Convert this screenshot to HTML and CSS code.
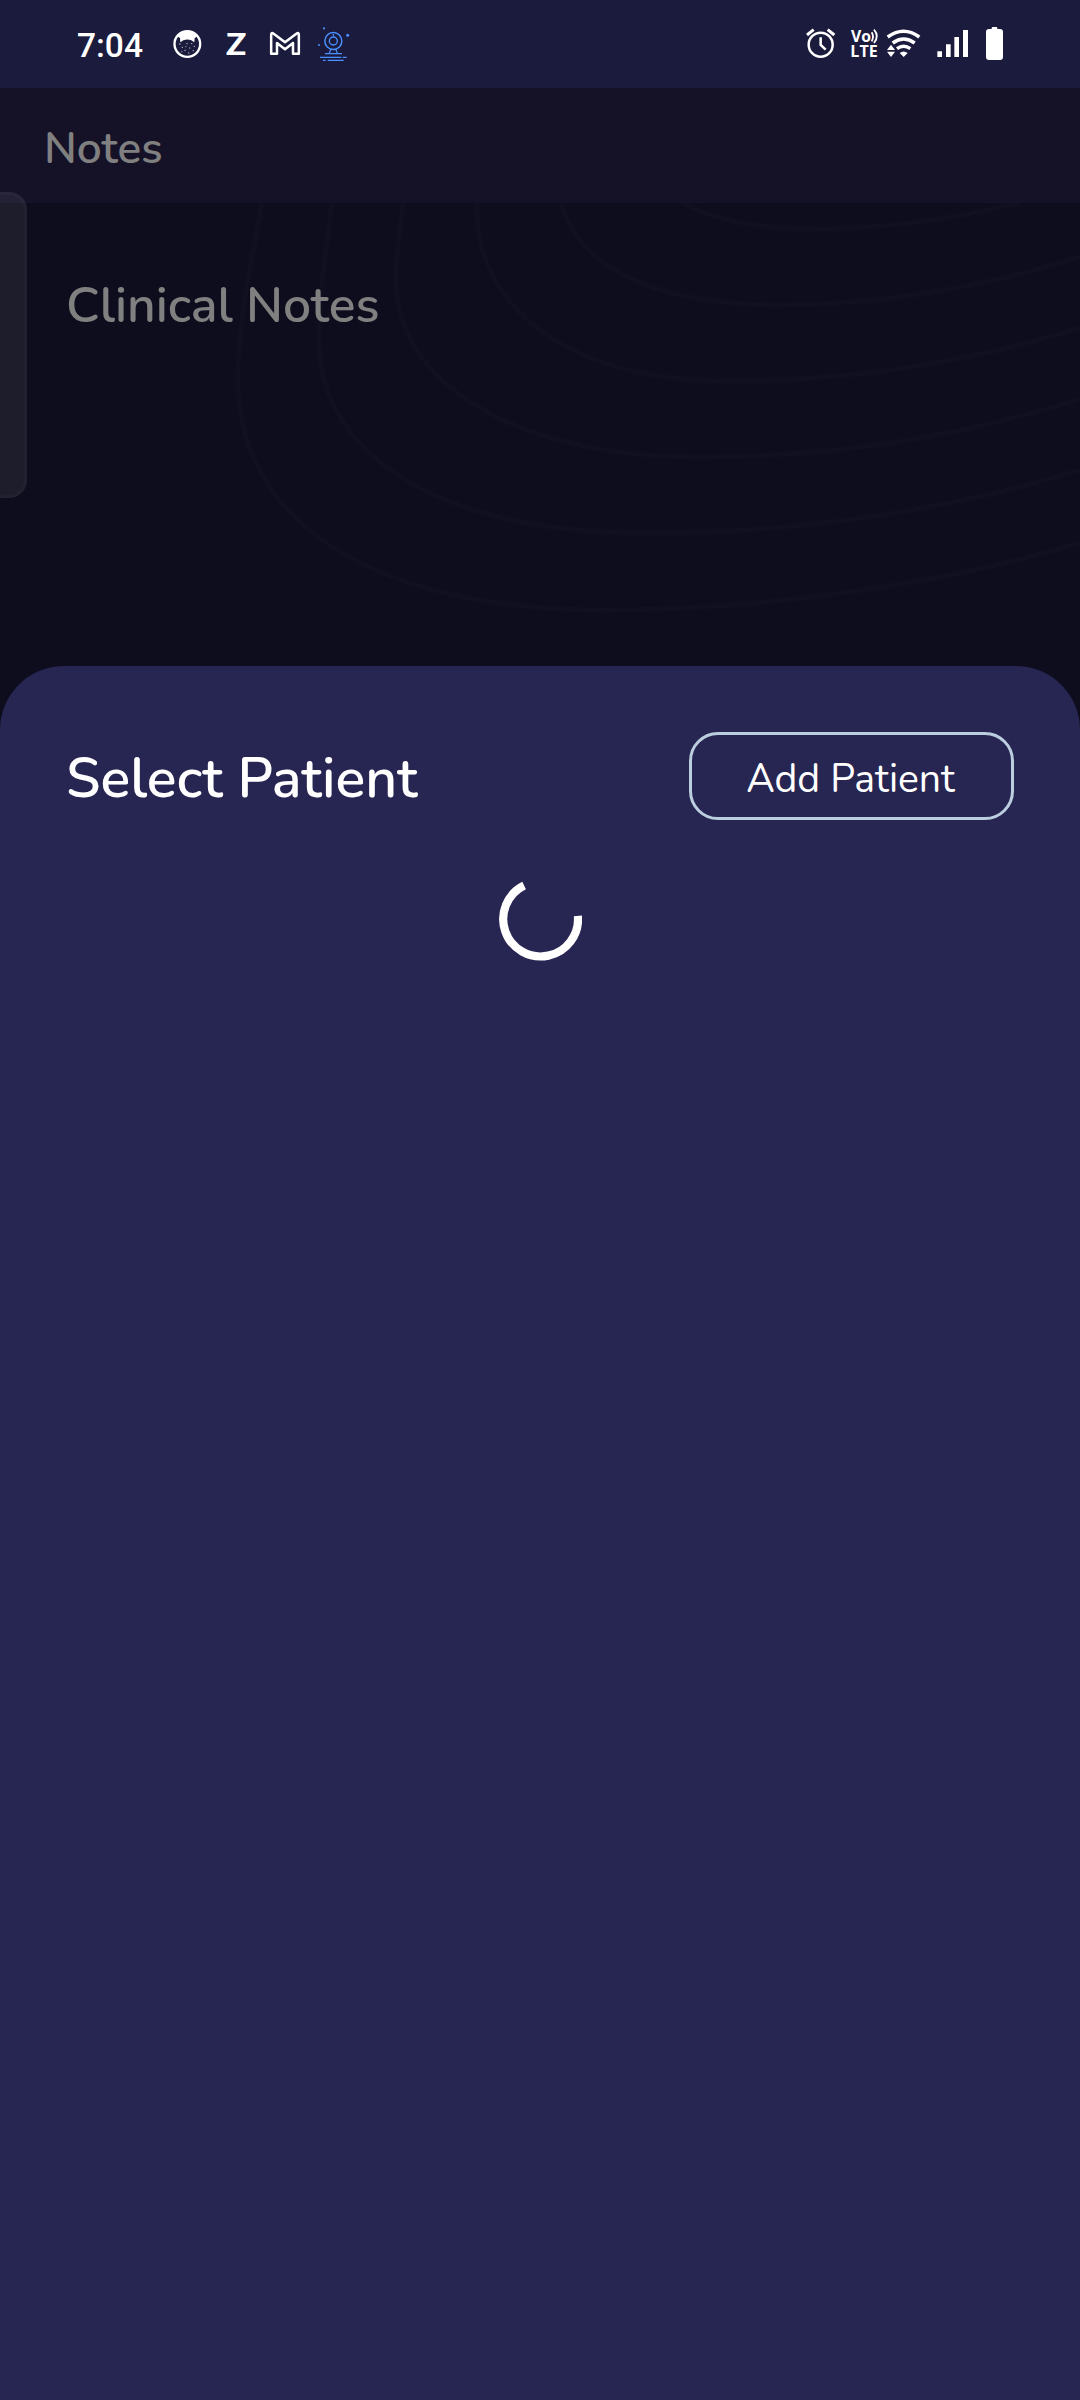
FILE: index.html
```html
<!DOCTYPE html>
<html lang="en">
<head>
<meta charset="utf-8">
<title>Clinical Notes</title>
<link rel="stylesheet" href="styles.css">
</head>
<body>
<div class="screen">
  <header class="status">
    <div class="time">7:04</div>
    <div class="icons">
      <svg width="50" height="70" viewBox="330 0 150 210">
        <circle cx="382" cy="102" r="38.500" fill="none" stroke="#fff" stroke-width="7"/>
        <path d="M350 78Q382 48 414 78L404 84L403 97L394 91Q382 86 370 91L361 97L360 84Z" fill="#fff"/>
        <path d="M357 102h5M365 112h4M379 101h4M393 101h4M373 121h4M387 114h4M401 109h4M398 122h4M384 129h4M364 125h3M376 110h3" stroke="#b5b5c8" stroke-width="3"/>
      </svg>
      <svg width="40" height="70" viewBox="480 0 120 210">
        <text class="zed" x="498" y="135" textLength="61" lengthAdjust="spacingAndGlyphs">Z</text>
      </svg>
      <svg width="50" height="70" viewBox="600 0 150 210">
        <path d="M633.500 131.500V75Q633.500 66 641 71L675 97L709 71Q716.500 66 716.500 75V131.500H699V99L675 118L651 99V131.500Z" fill="none" stroke="#fff" stroke-width="7.500" stroke-linejoin="round"/>
      </svg>
      <svg width="50" height="70" viewBox="750 0 150 210" fill="none" stroke="#4a90ff" stroke-width="3.500">
        <circle cx="820" cy="93" r="25.500" stroke-width="4.500"/>
        <circle cx="820" cy="93" r="12" stroke-width="4"/>
        <path d="M820 72v6M813 117l-5 13M827 117l5 13M795 131h51M780 142h64M848 142h12M789 151h8M803 151h48"/>
        <path d="M789 55h6M774 105h6" stroke-width="5"/>
        <circle cx="863" cy="76" r="4.500" fill="#4a90ff" stroke="none"/>
      </svg>
    </div>
    <div class="icons system">
      <svg width="45" height="70" viewBox="30 0 135 210" fill="none" stroke="#fff">
        <circle cx="92" cy="104" r="36" stroke-width="7.500"/>
        <path d="M51 75L71 59M133 75L113 59" stroke-width="9"/>
        <path d="M92 82V105L107 119" stroke-width="7.500"/>
      </svg>
      <svg width="40" height="70" viewBox="165 0 120 210">
        <text class="volte"><tspan x="183" y="97" font-size="46" textLength="60" lengthAdjust="spacingAndGlyphs">Vo</tspan><tspan x="181" y="141" font-size="50" textLength="82" lengthAdjust="spacingAndGlyphs">LTE</tspan></text>
        <path d="M245 67Q253 80 245 94M252 59Q269 79 252 99" fill="none" stroke="#fff" stroke-width="5.500"/>
      </svg>
      <svg width="45" height="70" viewBox="285 0 135 210">
        <g fill="none" stroke="#fff" stroke-width="10.500">
          <path d="M293 81Q341 46 388 81"/>
          <path d="M308 99Q341 75 374 99"/>
          <path d="M321 116Q341 102 361 116"/>
        </g>
        <path d="M329 129Q341 120 353 129L341 141ZM291 120L303 104L315 120ZM291 125H315L303 141Z" fill="#fff"/>
      </svg>
      <svg width="50" height="70" viewBox="420 0 150 210" fill="#fff">
        <path d="M442 124h14v17h-14zM468 103h14v38h-14zM493 81h14v60h-14zM519 60h15v81h-15z"/>
      </svg>
      <svg width="30" height="70" viewBox="570 0 90 210" fill="#fff">
        <rect x="605" y="51" width="17" height="12" rx="3"/>
        <rect x="588" y="57" width="51" height="93" rx="9"/>
      </svg>
    </div>
  </header>
  <div class="appbar"><span class="appbar-title">Notes</span></div>
  <main class="page">
    <svg class="waves" width="1080" height="463" viewBox="0 203 1080 463">
      <path d="M262 203C250 270 238 320 238 380C238 520 370 610 604 610C760 610 940 585 1080 543"/>
      <path d="M332 203C326 250 319 295 319 340C319 450 430 533 649 533C800 533 950 510 1080 470"/>
      <path d="M403 203C400 230 396 255 396 280C396 380 510 457 699 457C830 457 960 437 1080 399"/>
      <path d="M477 203C473 300 560 381 727 381C850 381 970 362 1080 328"/>
      <path d="M561 203C580 270 660 305 778 305C890 305 990 285 1080 257"/>
      <path d="M683 203C715 220 755 229 812 229C880 229 950 220 1019 203"/>
    </svg>
    <h1 class="page-title">Clinical Notes</h1>
    <div class="drawer-tab"></div>
  </main>
  <section class="sheet">
    <div class="sheet-head">
      <h2 class="sheet-title">Select Patient</h2>
      <button class="add">Add Patient</button>
    </div>
    <svg class="spinner" width="84" height="84" viewBox="-42.500 -42.200 84 84">
      <path d="M37.400 -3.300A37.400 37.400 0 1 1 -16.400 -33.700"/>
    </svg>
  </section>
</div>
</body>
</html>
```
FILE: styles.css
```css
* { box-sizing: border-box; }
body { margin: 0; background: #0e0d1d; }
.screen {
  width: 1080px;
  height: 2400px;
  display: flex;
  flex-direction: column;
  overflow: hidden;
  color: #fff;
  background: #0e0d1d;
  font-family: Nunito, "Noto Sans", "Open Sans", sans-serif;
}
.status {
  height: 88px;
  flex: none;
  display: flex;
  align-items: flex-start;
  padding: 10px 70px 0 77px;
  background: #1b1b3d;
}
.time {
  width: 93px;
  padding-top: 1px;
  font: 500 33.5px/70px Roboto, sans-serif;
  white-space: nowrap;
}
.icons { display: flex; }
.icons svg { display: block; }
.system { margin-left: auto; }
.zed { font: 900 92px Lato, sans-serif; fill: #fff; }
.volte { font-family: "Open Sans", sans-serif; font-weight: 700; fill: #fff; }
.appbar {
  height: 115px;
  flex: none;
  display: flex;
  align-items: center;
  padding: 6px 44px 0;
  background: #151228;
}
.appbar-title { font-size: 44.2px; font-weight: 600; line-height: 60px; color: #808080; }
.page {
  position: relative;
  height: 463px;
  flex: none;
  padding: 68px 66px 0;
}
.waves { position: absolute; left: 0; top: 0; fill: none; stroke: #111020; stroke-width: 5px; }
.page-title {
  position: relative;
  margin: 0;
  font-size: 49.8px;
  font-weight: 600;
  line-height: 70px;
  color: #808080;
}
.drawer-tab {
  position: absolute;
  left: -20px;
  top: -11px;
  width: 47px;
  height: 306px;
  border: 3px solid rgba(255, 255, 255, .025);
  border-radius: 18px;
  background: rgba(255, 255, 255, .065);
}
.sheet {
  flex: 1;
  display: flex;
  flex-direction: column;
  align-items: center;
  padding: 66px 66px 0;
  border-radius: 64px 64px 0 0;
  background: #272552;
}
.sheet-head {
  align-self: stretch;
  display: flex;
  justify-content: space-between;
  align-items: center;
}
.sheet-title {
  margin: 0;
  padding-top: 6px;
  font-size: 55.4px;
  font-weight: 600;
  line-height: 80px;
  white-space: nowrap;
}
.add {
  width: 325px;
  height: 88px;
  padding: 5px 2px 0 0;
  border: 3px solid #bccddf;
  border-radius: 29px;
  background: none;
  color: #fff;
  font: 400 39.2px/60px Nunito, "Noto Sans", "Open Sans", sans-serif;
}
.spinner { margin-top: 57px; fill: none; stroke: #fff; stroke-width: 8.2px; }
```
